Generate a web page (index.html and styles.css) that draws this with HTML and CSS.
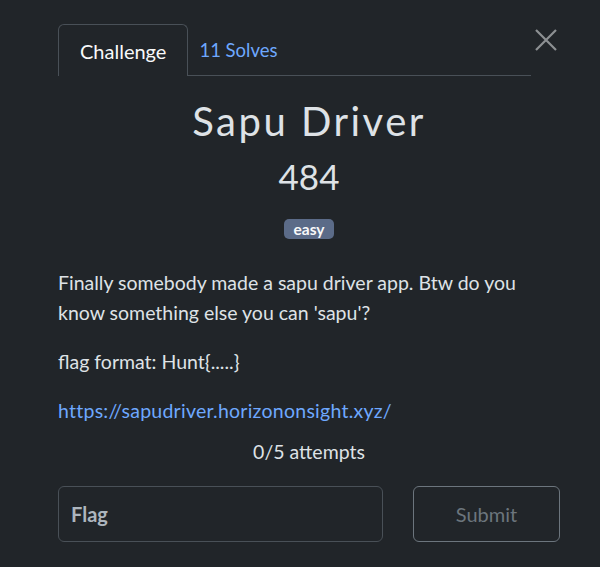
FILE: index.html
```html
<!DOCTYPE html>
<html>
<head>
<meta charset="utf-8">
<link rel="stylesheet" href="styles.css">
</head>
<body>
<div class="modal">
  <div class="header">
    <nav class="tabs">
      <span class="tab active">Challenge</span>
      <span class="tab second">11 Solves</span>
    </nav>
    <button class="close" aria-label="Close">
      <svg width="22" height="22" viewBox="0 0 22 22"><path d="M1 1L21 21M21 1L1 21" stroke="#8d9093" stroke-width="2.2" fill="none"/></svg>
    </button>
  </div>
  <h2 class="title">Sapu Driver</h2>
  <h3 class="value">484</h3>
  <div class="tags"><span class="badge">easy</span></div>
  <div class="desc">
    <p>Finally somebody made a sapu driver app. Btw do you know something else you can 'sapu'?</p>
    <p>flag format: Hunt{.....}</p>
    <p><a href="#">https://sapudriver.horizononsight.xyz/</a></p>
  </div>
  <p class="attempts">0/5 attempts</p>
  <div class="form">
    <input class="flag" type="text" placeholder="Flag">
    <button class="submit">Submit</button>
  </div>
</div>
</body>
</html>
```
FILE: styles.css
```css
html, body {
  margin: 0;
  padding: 0;
  background: #212529;
  font-family: Lato, "Open Sans", sans-serif;
  color: #dee2e6;
}
.modal {
  margin-left: 58px;
  width: 502px;
  padding-top: 24px;
}
.header {
  display: flex;
  align-items: flex-start;
}
.tabs {
  display: flex;
  width: 473px;
  border-bottom: 1px solid #495057;
  height: 51px;
}
.tab {
  display: flex;
  align-items: center;
  padding: 0 21px;
  font-size: 20px;
  color: #6ea8fe;
  border: 1px solid transparent;
  border-bottom: none;
  border-radius: 6px 6px 0 0;
  height: 51px;
  box-sizing: border-box;
  margin-bottom: -1px;
}
.tab.second { padding-left: 10px; font-size: 18.5px; }
.tab.active {
  color: #f8f9fa;
  border-color: #495057;
  background: #212529;
  height: 52px;
}
.close {
  background: none;
  border: none;
  padding: 0;
  margin: 5px 0 0 4px;
  width: 22px;
  height: 22px;
  display: block;
}
.close svg { display: block; }
.title {
  margin: 21px 0 0;
  text-align: center;
  font-size: 40px;
  font-weight: 400;
  letter-spacing: 2.5px;
  line-height: 48px;
  color: #dee2e6;
}
.value {
  margin: 10px 0 0;
  text-align: center;
  font-size: 35px;
  font-weight: 400;
  line-height: 42px;
  color: #dee2e6;
}
.tags {
  text-align: center;
  margin-top: 22px;
  height: 20px;
}
.badge {
  display: inline-block;
  background: #5b6b88;
  color: #f8f9fa;
  font-weight: 700;
  font-size: 15.5px;
  line-height: 20px;
  height: 20px;
  padding: 0 10px;
  border-radius: 5px;
}
.desc {
  margin-top: 29px;
  font-size: 19.5px;
  line-height: 30px;
  color: #dee2e6;
}
.desc p { margin: 0 0 19px; }
.desc a { color: #6ea8fe; text-decoration: none; letter-spacing: 0.25px; }
.attempts {
  margin: -8px 0 0;
  text-align: center;
  font-size: 19.5px;
  line-height: 30px;
  color: #dee2e6;
}
.form {
  display: flex;
  justify-content: space-between;
  margin-top: 19px;
}
.flag {
  width: 325px;
  height: 56px;
  box-sizing: border-box;
  border: 1px solid #495057;
  border-radius: 6px;
  background: #212529;
  padding: 0 12px;
  font-family: Lato, sans-serif;
  font-size: 20px;
  color: #dee2e6;
}
.flag::placeholder { color: #adb5bd; font-weight: 700; }
.submit {
  width: 147px;
  height: 56px;
  box-sizing: border-box;
  border: 1px solid #6c757d;
  border-radius: 6px;
  background: transparent;
  font-family: Lato, sans-serif;
  font-size: 20px;
  color: #6c757d;
}
```
